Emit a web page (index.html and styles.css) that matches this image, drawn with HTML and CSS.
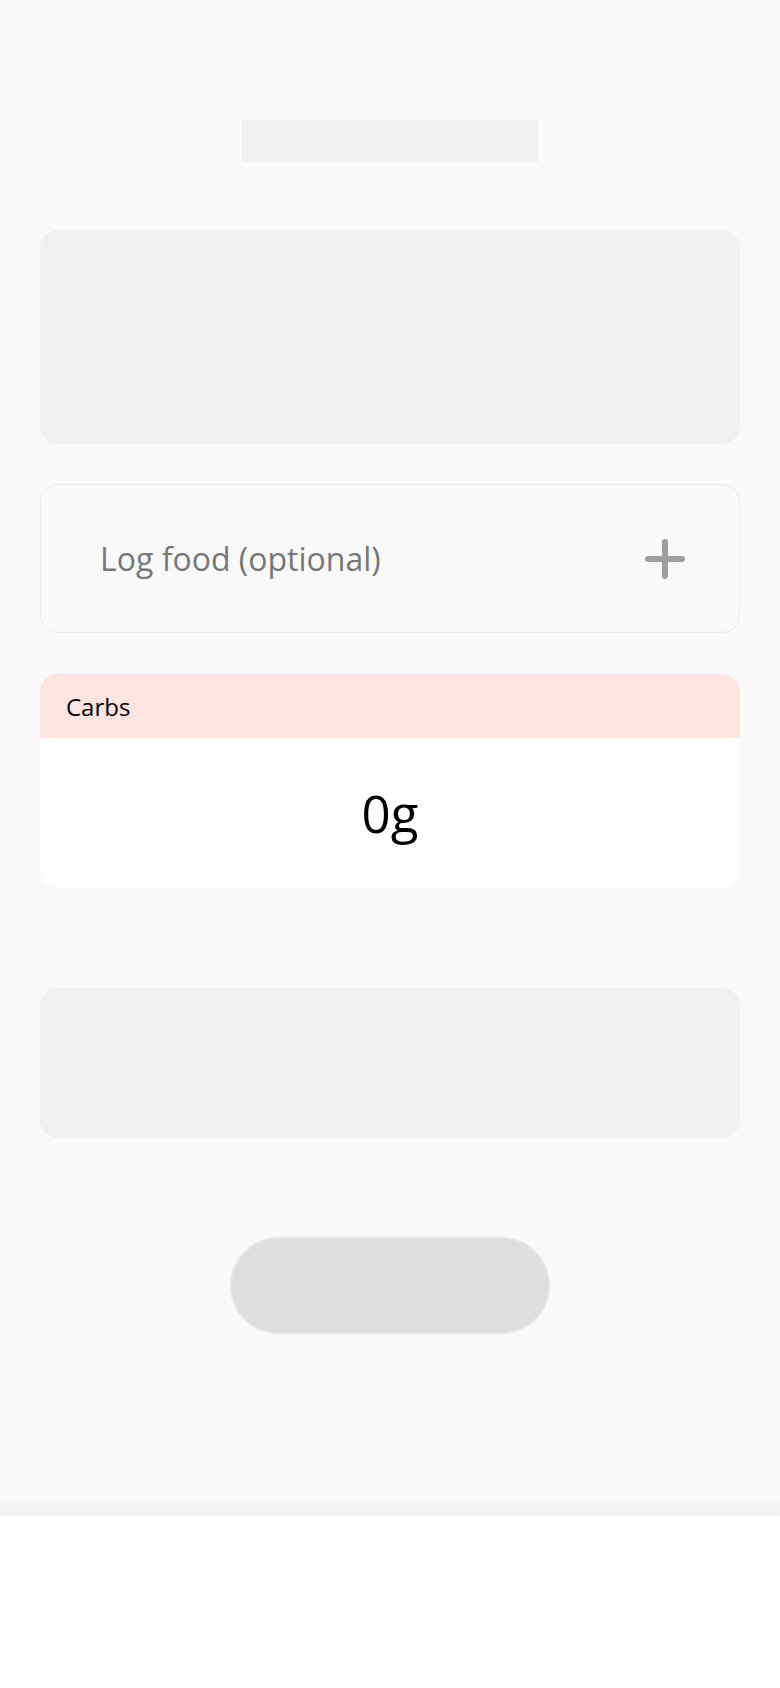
FILE: index.html
```html
<!DOCTYPE html>
<html>
<head>
<meta charset="utf-8">
<link rel="stylesheet" href="styles.css">
</head>
<body>
<div class="app">
  <div class="title-ph"></div>
  <div class="ph ph-large"></div>
  <div class="log-card">
    <span class="log-text">Log food (optional)</span>
    <svg class="plus" width="40" height="40" viewBox="0 0 40 40">
      <path d="M20 3 V37 M3 20 H37" stroke="#9e9e9e" stroke-width="6" stroke-linecap="round" fill="none"/>
    </svg>
  </div>
  <div class="macro-card">
    <div class="macro-head">Carbs</div>
    <div class="macro-body">0g</div>
  </div>
  <div class="ph ph-medium"></div>
  <div class="pill"></div>
</div>
</body>
</html>
```
FILE: styles.css
```css
html, body {
  margin: 0;
  padding: 0;
  background: #ffffff;
}
body {
  font-family: "Open Sans", "Noto Sans", sans-serif;
}
.app {
  box-sizing: border-box;
  height: 1516px;
  padding: 120px 40px 0;
  display: flex;
  flex-direction: column;
  background: linear-gradient(to bottom, #f9f9f9 0, #f9f9f9 calc(100% - 20px), #efefef 100%);
}
.title-ph {
  align-self: center;
  width: 296px;
  height: 42px;
  background: #f0f0f0;
}
.ph {
  background: #f0f0f0;
  border-radius: 18px;
}
.ph-large {
  margin-top: 68px;
  height: 214px;
}
.log-card {
  margin-top: 40px;
  box-sizing: border-box;
  height: 149px;
  border: 1.5px solid #ebebeb;
  border-radius: 18px;
  display: flex;
  align-items: center;
  justify-content: space-between;
  padding: 0 54px 0 59px;
}
.log-text {
  font-size: 32px;
  color: #777777;
}
.plus {
  display: block;
}
.macro-card {
  margin-top: 41px;
  border-radius: 18px;
  overflow: hidden;
  background: #ffffff;
}
.macro-head {
  height: 64px;
  background: #fee3e3;
  display: flex;
  align-items: center;
  padding-left: 26px;
  font-size: 24px;
  color: #000000;
}
.macro-body {
  height: 150px;
  display: flex;
  align-items: center;
  justify-content: center;
  font-size: 51px;
  color: #000000;
}
.ph-medium {
  margin-top: 100px;
  height: 150px;
}
.pill {
  align-self: center;
  margin-top: 99px;
  box-sizing: border-box;
  width: 320px;
  height: 97px;
  border-radius: 49px;
  background: #dedede;
  border: 2px solid #e6e6e6;
}
```
